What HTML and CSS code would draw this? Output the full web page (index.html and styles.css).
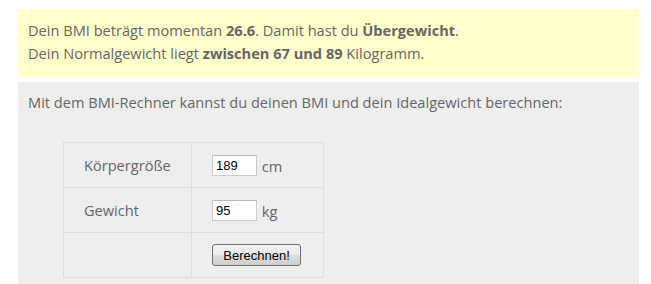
FILE: index.html
```html
<!DOCTYPE html>
<html lang="de">
<head>
    <meta charset="UTF-8">
    <meta name="viewport" content="width=device-width, initial-scale=1.0">
    <title>BMI-Rechner</title>
    <link rel="stylesheet" href="styles.css">
</head>
<body>
    <div class="page">
        <!-- Ergebnis -->
        <div class="result">
            Dein BMI beträgt momentan <b>26.6</b>. Damit hast du <b>Übergewicht</b>.<br>
            Dein Normalgewicht liegt <b>zwischen 67 und 89</b> Kilogramm.
        </div>

        <!-- Rechner -->
        <div class="calc">
            <p>Mit dem BMI-Rechner kannst du deinen BMI und dein Idealgewicht berechnen:</p>
            <table class="calc-table">
                <tr>
                    <td class="label">Körpergröße</td>
                    <td><input type="text" value="189"> <span class="unit">cm</span></td>
                </tr>
                <tr>
                    <td class="label">Gewicht</td>
                    <td><input type="text" value="95"> <span class="unit">kg</span></td>
                </tr>
                <tr>
                    <td></td>
                    <td><button>Berechnen!</button></td>
                </tr>
            </table>
        </div>
    </div>
</body>
</html>
```

FILE: styles.css
```css
body {
    font-family: "Open Sans", Arial, sans-serif;
    font-size: 14.6px;
    margin: 0;
    padding: 0;
    background-color: #ffffff;
    color: #666666;
}
.page {
    width: 621px;
    padding: 9px 0 0 18px;
}
/* Ergebnis-Box */
.result {
    background-color: #ffffcc;
    padding: 10px 10px 12px 10px;
    line-height: 23px;
    margin-bottom: 5px;
}
.result b {
    font-weight: bold;
}
/* Rechner-Box */
.calc {
    background-color: #eeeeee;
    padding: 9px 10px 20px 10px;
}
.calc p {
    margin: 0 0 28px 0;
    line-height: 23px;
}
.calc-table {
    border-collapse: collapse;
    margin-left: 35px;
}
.calc-table td {
    border: 1px solid #dddddd;
    height: 44px;
    padding: 0 20px;
    vertical-align: middle;
}
.calc-table td.label {
    width: 87px;
}
.calc-table td + td {
    width: 91px;
}
input {
    font-family: "Liberation Sans", Arial, sans-serif;
    font-size: 13px;
    width: 37px;
    height: 15px;
    padding: 2px 3px;
    border: 1px solid #cccccc;
    border-top-color: #bbbbbb;
    background: #ffffff;
    color: #000000;
    vertical-align: middle;
}
.unit {
    vertical-align: middle;
    margin-left: 1px;
}
button {
    font-family: "Liberation Sans", Arial, sans-serif;
    font-size: 13px;
    color: #000000;
    width: 89px;
    height: 22px;
    padding: 0;
    border: 1px solid #707070;
    border-radius: 3px;
    background: linear-gradient(#f2f2f2, #ebebeb 50%, #dddddd 51%, #cfcfcf);
    cursor: pointer;
}
```
